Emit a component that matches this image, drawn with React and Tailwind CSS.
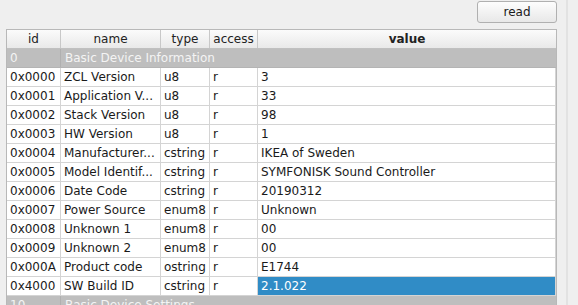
import React from "react";

const rows = [
  ["0x0000", "ZCL Version", "u8", "r", "3"],
  ["0x0001", "Application V...", "u8", "r", "33"],
  ["0x0002", "Stack Version", "u8", "r", "98"],
  ["0x0003", "HW Version", "u8", "r", "1"],
  ["0x0004", "Manufacturer...", "cstring", "r", "IKEA of Sweden"],
  ["0x0005", "Model Identif...", "cstring", "r", "SYMFONISK Sound Controller"],
  ["0x0006", "Date Code", "cstring", "r", "20190312"],
  ["0x0007", "Power Source", "enum8", "r", "Unknown"],
  ["0x0008", "Unknown 1", "enum8", "r", "00"],
  ["0x0009", "Unknown 2", "enum8", "r", "00"],
  ["0x000A", "Product code", "ostring", "r", "E1744"],
  ["0x4000", "SW Build ID", "cstring", "r", "2.1.022"],
];

const font = { fontFamily: '"DejaVu Sans", sans-serif' };

function HeadCell({ w, children, bold, last }) {
  return (
    <div
      className={`${w} h-full flex items-center justify-center ${last ? "" : "border-r border-[#c8c8c8]"} ${bold ? "font-bold" : ""}`}
    >
      {children}
    </div>
  );
}

function Cell({ w, children, sel }) {
  return (
    <div
      className={`${w} h-full flex items-center pl-[3px] whitespace-nowrap overflow-hidden border-r border-b border-[#d4d4d4] ${sel ? "bg-[#308cc6] text-white" : "bg-white text-[#1a1a1a]"}`}
    >
      {children}
    </div>
  );
}

function GroupRow({ id, label }) {
  return (
    <div className="flex h-[19px] bg-[#bebebe] text-[#f4f4f4] border-b border-[#b4b4b4]">
      <div className="w-[54px] flex items-center pl-[3px] border-r border-[#b0b0b0]">{id}</div>
      <div className="flex-1 flex items-center pl-[4px] whitespace-nowrap">{label}</div>
    </div>
  );
}

export default function App() {
  return (
    <div className="w-[578px] h-[305px] bg-[#efefef] relative overflow-hidden text-[12px]" style={font}>
      <div className="flex justify-end pr-[21px] pt-[1px] h-[29px]">
        <button className="w-[80px] h-[22px] rounded-[3px] border border-[#b0b0b0] bg-gradient-to-b from-[#fdfdfd] to-[#e8e8e8] text-[#1a1a1a] text-[12px] flex items-center justify-center">
          read
        </button>
      </div>
      <div className="absolute top-0 bottom-0 left-[566px] w-[2px] bg-[#e2e2e2]"></div>
      <div className="ml-[6px] w-[551px] border-l border-r border-t border-[#b8b8b8] bg-white">
        <div className="flex h-[19px] bg-gradient-to-b from-[#fbfbfb] to-[#e9e9e9] text-[#222] border-b border-[#c0c0c0]">
          <HeadCell w="w-[54px]">id</HeadCell>
          <HeadCell w="w-[100px]">name</HeadCell>
          <HeadCell w="w-[49px]">type</HeadCell>
          <HeadCell w="w-[48px]">access</HeadCell>
          <HeadCell w="flex-1" bold last>value</HeadCell>
        </div>
        <GroupRow id="0" label="Basic Device Information" />
        {rows.map((r, i) => (
          <div key={r[0]} className="flex h-[19px]">
            <Cell w="w-[54px]">{r[0]}</Cell>
            <Cell w="w-[100px]">{r[1]}</Cell>
            <Cell w="w-[49px]">{r[2]}</Cell>
            <Cell w="w-[48px]">{r[3]}</Cell>
            <Cell w="flex-1" sel={i === rows.length - 1}>{r[4]}</Cell>
          </div>
        ))}
        <GroupRow id="10" label="Basic Device Settings" />
      </div>
    </div>
  );
}
